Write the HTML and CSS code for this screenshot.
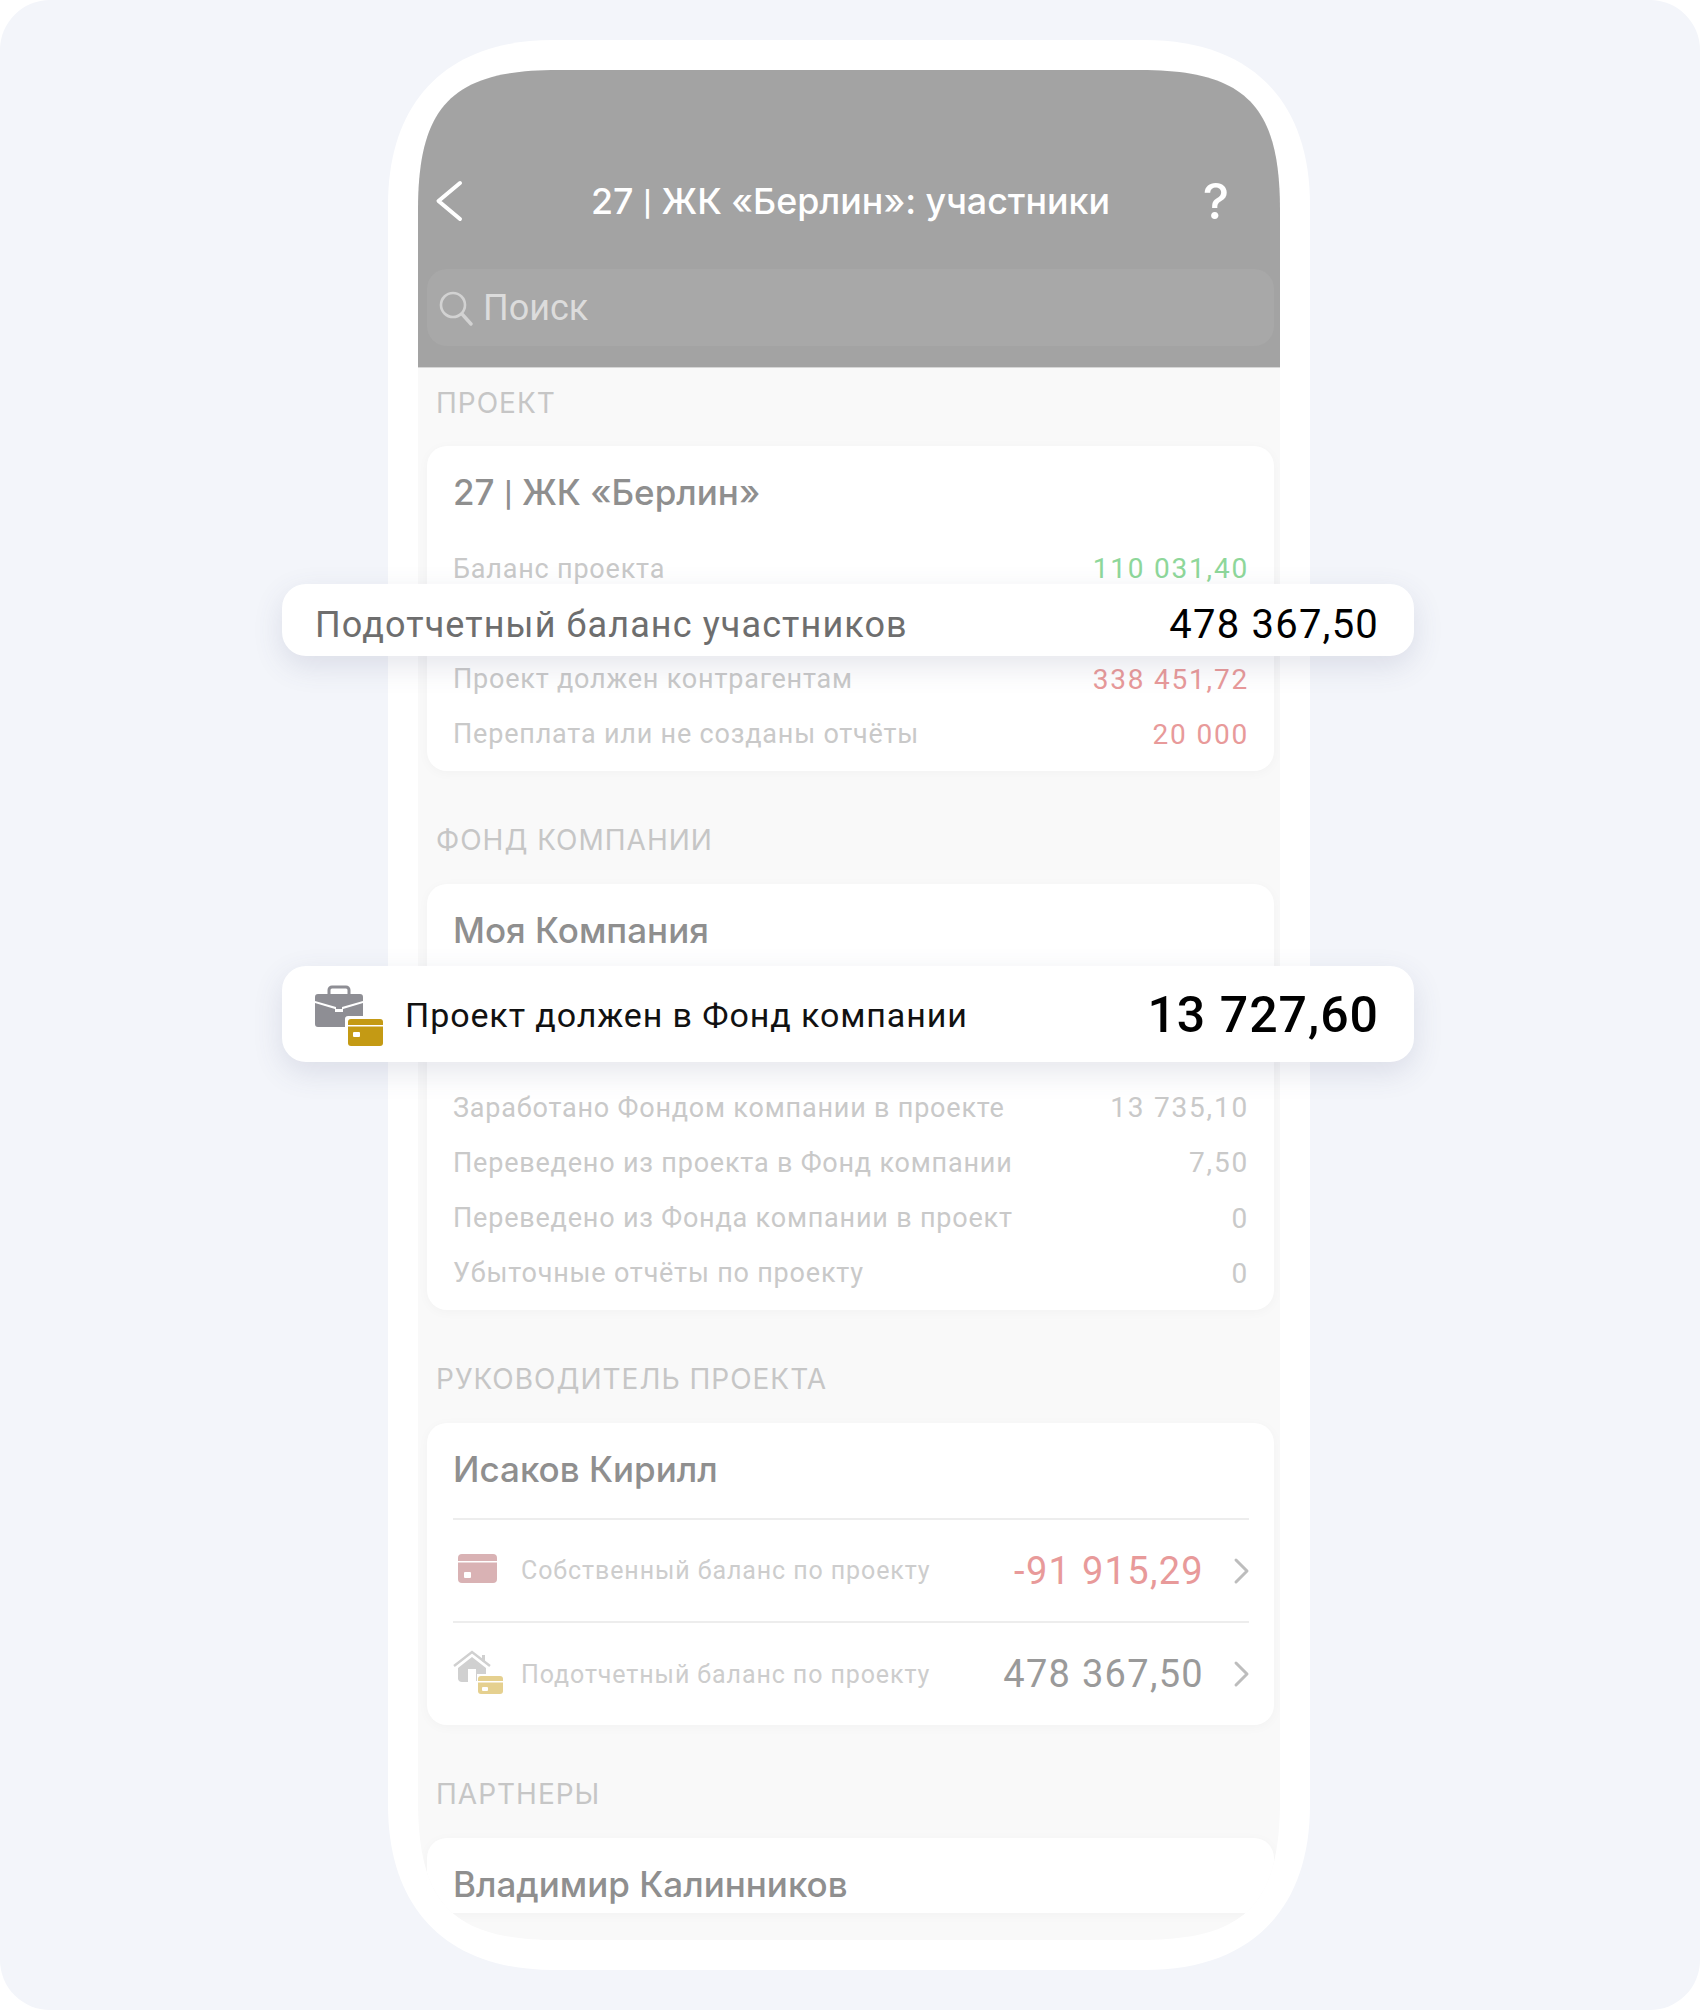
FILE: index.html
```html
<!DOCTYPE html>
<html>
	<head>
		<meta charset="UTF-8">
		<title>Участники проекта</title>
		<link rel="stylesheet" href="styles.css">
	</head>
	<body>
		<div class="page">
			<div class="phone">
				<div class="screen">
					<div class="header">
						<div class="nav">
							<svg class="back" width="30" height="42" viewBox="0 0 30 42"><path d="M25 3 3.500 21 25 39" fill="none" stroke="#fff" stroke-width="4" stroke-linecap="round" stroke-linejoin="round"/></svg>
							<div class="title">27 <span class="bar">|</span> ЖК «Берлин»: участники</div>
							<div class="help">?</div>
						</div>
						<div class="search">
							<svg width="36" height="36" viewBox="0 0 36 36"><circle cx="15" cy="15" r="12" fill="none" stroke="#d2d2d2" stroke-width="2.6"/><path d="m24 24 9 10" stroke="#d2d2d2" stroke-width="3.4" stroke-linecap="round"/></svg>
							<span>Поиск</span>
						</div>
					</div>

					<div class="label first">ПРОЕКТ</div>
					<div class="card">
						<div class="name">27 <span class="bar">|</span> ЖК «Берлин»</div>
						<div class="row"><span>Баланс проекта</span><span class="val green">110 031,40</span></div>
						<div class="gap small"></div>
						<div class="row"><span>Проект должен контрагентам</span><span class="val red">338 451,72</span></div>
						<div class="row"><span>Переплата или не созданы отчёты</span><span class="val red">20 000</span></div>
					</div>

					<div class="label">ФОНД КОМПАНИИ</div>
					<div class="card">
						<div class="name">Моя Компания</div>
						<div class="gap"></div>
						<div class="row"><span>Заработано Фондом компании в проекте</span><span class="val">13 735,10</span></div>
						<div class="row"><span>Переведено из проекта в Фонд компании</span><span class="val">7,50</span></div>
						<div class="row"><span>Переведено из Фонда компании в проект</span><span class="val">0</span></div>
						<div class="row"><span>Убыточные отчёты по проекту</span><span class="val">0</span></div>
					</div>

					<div class="label">РУКОВОДИТЕЛЬ ПРОЕКТА</div>
					<div class="card person">
						<div class="name">Исаков Кирилл</div>
						<div class="balance">
							<div class="ico">
								<svg width="50" height="36" viewBox="0 0 50 36"><path d="M9 1h31a4 4 0 0 1 4 4v3H5V5a4 4 0 0 1 4-4Z" fill="#d9b2b4"/><path d="M5 9.500h39V26a4 4 0 0 1-4 4H9a4 4 0 0 1-4-4Z" fill="#d9b2b4"/><rect x="11" y="19" width="7" height="6" rx="1" fill="#fff"/></svg>
							</div>
							<div class="what">Собственный баланс по проекту</div>
							<div class="sum red">-91 915,29</div>
							<svg class="more" width="18" height="28" viewBox="0 0 18 28"><path d="m4 3 11 11L4 25" fill="none" stroke="#bdbdbd" stroke-width="3" stroke-linecap="round" stroke-linejoin="round"/></svg>
						</div>
						<div class="balance">
							<div class="ico">
								<svg width="54" height="48" viewBox="0 0 54 48"><path d="m1 16 18-14 18 14" fill="none" stroke="#d0d0d0" stroke-width="2.4"/><path d="M5 18 19 7l14 11v6h-9v7h-1V19h-8v13H9a4 4 0 0 1-4-3Z" fill="#d0d0d0"/><path d="M29 5h3v8l-3-2Z" fill="#d0d0d0"/><path d="M28 26h19a3 3 0 0 1 3 3v2H25v-2a3 3 0 0 1 3-3Z" fill="#e5d08f"/><path d="M25 32.500h25V41a3 3 0 0 1-3 3H28a3 3 0 0 1-3-3Z" fill="#e5d08f"/><rect x="29" y="37" width="6" height="4" rx="1" fill="#fff"/></svg>
							</div>
							<div class="what">Подотчетный баланс по проекту</div>
							<div class="sum">478 367,50</div>
							<svg class="more" width="18" height="28" viewBox="0 0 18 28"><path d="m4 3 11 11L4 25" fill="none" stroke="#bdbdbd" stroke-width="3" stroke-linecap="round" stroke-linejoin="round"/></svg>
						</div>
					</div>

					<div class="label">ПАРТНЕРЫ</div>
					<div class="card last">
						<div class="name">Владимир Калинников</div>
					</div>
				</div>

				<div class="callout one">
					<span class="c-text">Подотчетный баланс участников</span>
					<span class="c-sum">478 367,50</span>
				</div>
				<div class="callout two">
					<svg width="68" height="61" viewBox="0 0 68 61">
						<path d="M14 9V5a3 3 0 0 1 3-3h14a3 3 0 0 1 3 3v4" fill="none" stroke="#8e8e94" stroke-width="3"/>
						<path d="M3 9h42a3 3 0 0 1 3 3v4L27 22v2h-6v-2L0 16v-4a3 3 0 0 1 3-3Z" fill="#8e8e94"/>
						<path d="M0 18l20 6v3h8v-3l20-6v13H33a3 3 0 0 0-3 3v8H3a3 3 0 0 1-3-3Z" fill="#8e8e94"/>
						<path d="M36 34h29a3 3 0 0 1 3 3v3H33v-3a3 3 0 0 1 3-3Z" fill="#c49a14"/>
						<path d="M33 41.500h35V58a3 3 0 0 1-3 3H36a3 3 0 0 1-3-3Z" fill="#c49a14"/>
						<rect x="38" y="47" width="7" height="5" rx="1" fill="#fff"/>
					</svg>
					<span class="c-text dark">Проект должен в Фонд компании</span>
					<span class="c-sum big">13 727,60</span>
				</div>
			</div>
		</div>
	</body>
</html>
```

FILE: styles.css
```css
*{
	padding: 0;
	margin: 0;
	box-sizing: border-box;
}
html,body{
	height: 100%;
	background-color: #fff;
}
body{
	font-family: Roboto, "Liberation Sans", sans-serif;
	overflow: hidden;
}
.page{
	height: 2010px;
	padding: 40px 0 0 388px;
	background-color: #f3f5fa;
	border-radius: 50px;
}
.phone{
	position: relative;
	width: 922px;
	height: 1930px;
	padding: 30px 0 0 30px;
}
.phone::before{
	content: "";
	position: absolute;
	left: 0;
	top: 0;
	width: 922px;
	height: 1930px;
	background-color: #fff;
	clip-path: path("M0 165C0 60 60 0 165 0H757C862 0 922 60 922 165V1765C922 1870 862 1930 757 1930H165C60 1930 0 1870 0 1765Z");
}
.screen{
	position: relative;
	width: 862px;
	height: 1870px;
	background-color: #f9f9f9;
	overflow: hidden;
	clip-path: path("M0 140C0 35 35 0 140 0H722C827 0 862 35 862 140V1730C862 1835 827 1870 722 1870H140C35 1870 0 1835 0 1730Z");
}
.header{
	height: 298px;
	padding: 98px 6px 0 9px;
	background-color: #a3a3a3;
	border-bottom: 1px solid #d6d6d6;
}
.nav{
	display: grid;
	grid-template-columns: 116px 1fr 116px;
	align-items: center;
	height: 66px;
}
.back{
	margin-left: 8px;
}
.title{
	text-align: center;
	color: #fff;
	font-family: Inter, "Liberation Sans", sans-serif;
	font-size: 35.8px;
	font-weight: 500;
	white-space: nowrap;
}
.bar{
	font-family: Roboto, "Liberation Sans", sans-serif;
}
.help{
	text-align: center;
	color: #fff;
	font-family: Inter, "Liberation Sans", sans-serif;
	font-size: 50px;
	font-weight: 500;
}
.search{
	display: flex;
	align-items: center;
	gap: 9px;
	height: 77px;
	margin-top: 35px;
	padding-left: 11px;
	background-color: #a8a8a8;
	border-radius: 20px;
	color: #dcdcdc;
	font-size: 36px;
}
.label{
	height: 30px;
	margin: 54px 0 29px 18px;
	line-height: 30px;
	font-family: Inter, "Liberation Sans", sans-serif;
	font-size: 28px;
	letter-spacing: 1px;
	color: #c6c6c6;
}
.label.first{
	margin-top: 20px;
	margin-bottom: 28px;
}
.card{
	margin: 0 6px 0 9px;
	padding: 0 25px 0 26px;
	background-color: #fff;
	border-radius: 20px;
	box-shadow: 0 2px 12px rgba(0,0,0,.03);
	overflow: hidden;
}
.name{
	height: 95px;
	line-height: 93px;
	font-family: Inter, "Liberation Sans", sans-serif;
	font-size: 35px;
	font-weight: 500;
	color: #8f8f8f;
}
.row{
	display: flex;
	justify-content: space-between;
	align-items: center;
	height: 55.3px;
	font-size: 27px;
	letter-spacing: .8px;
	color: #c9c9c9;
}
.row:last-child{
	height: 64px;
	padding-bottom: 9px;
}
.val{
	font-size: 28px;
	letter-spacing: 1.8px;
}
.gap{
	height: 101px;
}
.gap.small{
	height: 55.3px;
}
.green{
	color: #8ed79a;
}
.red{
	color: #e89a9a;
}
.balance{
	display: flex;
	align-items: center;
	height: 103.5px;
	border-top: 2px solid #ededed;
}
.ico{
	width: 68px;
	display: flex;
	align-items: center;
}
.what{
	flex: 1;
	font-size: 25px;
	letter-spacing: .9px;
	color: #cdcdcd;
}
.sum{
	font-size: 38px;
	letter-spacing: 1.3px;
	color: #9a9a9a;
}
.sum.red{
	color: #e89a9a;
}
.more{
	margin-left: 28px;
	margin-right: -1px;
}
.last{
	height: 75px;
	border-radius: 20px 20px 0 0;
}
.callout{
	position: absolute;
	left: -106px;
	width: 1132px;
	display: flex;
	align-items: center;
	padding: 0 35px 0 33px;
	background-color: #fff;
	border-radius: 24px;
	box-shadow: 0 10px 30px rgba(70,80,120,.14);
}
.callout.one{
	top: 544px;
	height: 72px;
	padding-top: 9px;
}
.callout.two{
	top: 926px;
	height: 96px;
	padding-top: 2px;
}
.callout.two svg{
	margin-right: 22px;
}
.c-text{
	flex: 1;
	font-size: 36px;
	letter-spacing: 1.1px;
	color: #6e6e6e;
}
.c-text.dark{
	font-size: 34px;
	letter-spacing: .9px;
	color: #111;
}
.c-sum{
	font-size: 40px;
	letter-spacing: 1.2px;
	color: #000;
}
.c-sum.big{
	font-size: 50px;
	font-weight: 500;
	letter-spacing: 1px;
}
```
